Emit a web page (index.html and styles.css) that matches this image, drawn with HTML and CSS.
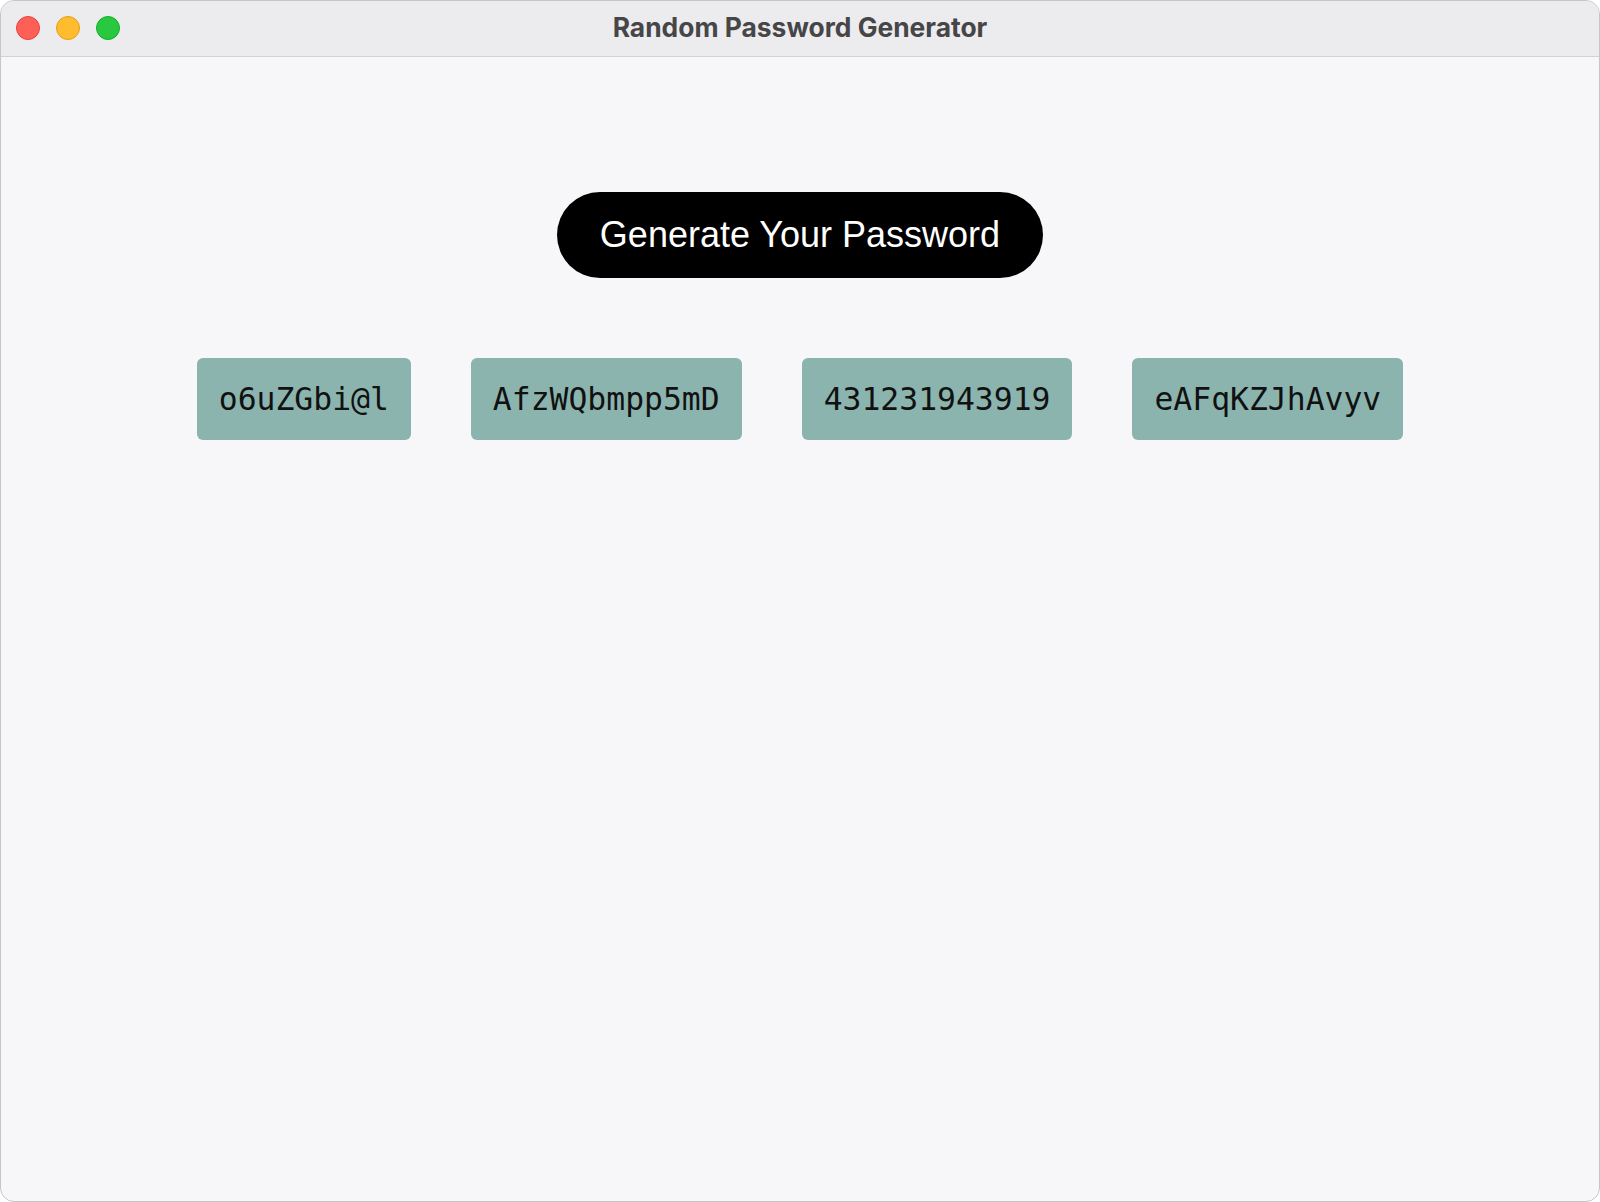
FILE: index.html
```html
<!DOCTYPE html>
<html lang="en">
<head>
<meta charset="utf-8">
<title>Random Password Generator</title>
<link rel="stylesheet" href="styles.css">
</head>
<body>
<div class="window">
  <header class="titlebar">
    <div class="lights">
      <span class="light red"></span>
      <span class="light yellow"></span>
      <span class="light green"></span>
    </div>
    <div class="title">Random Password Generator</div>
    <div class="spacer"></div>
  </header>
  <main class="content">
    <button class="generate" type="button">Generate Your Password</button>
    <div class="passwords">
      <div class="pw">o6uZGbi@l</div>
      <div class="pw">AfzWQbmpp5mD</div>
      <div class="pw">431231943919</div>
      <div class="pw">eAFqKZJhAvyv</div>
    </div>
  </main>
</div>
</body>
</html>
```

FILE: styles.css
```css
html, body {
  margin: 0;
  padding: 0;
  background: #ffffff;
}

.window {
  box-sizing: border-box;
  width: 1600px;
  height: 1202px;
  border: 1px solid #c6c6c8;
  border-radius: 14px;
  overflow: hidden;
  background: #f7f7f9;
  display: flex;
  flex-direction: column;
}

.titlebar {
  box-sizing: border-box;
  height: 56px;
  flex: 0 0 56px;
  background: #ececee;
  border-bottom: 1px solid #d2d2d4;
  display: grid;
  grid-template-columns: 1fr auto 1fr;
  align-items: center;
}

.lights {
  display: flex;
  gap: 16px;
  padding-left: 15px;
  padding-bottom: 1px;
}

.light {
  box-sizing: border-box;
  width: 24px;
  height: 24px;
  border-radius: 50%;
}

.red { background: #fe5f57; border: 1px solid #e2463f; }
.yellow { background: #febc2e; border: 1px solid #e1a116; }
.green { background: #28c840; border: 1px solid #14ae2a; }

.title {
  font-family: Inter, "Liberation Sans", sans-serif;
  font-weight: 700;
  font-size: 26.4px;
  color: #464648;
  padding-bottom: 3px;
}

.content {
  flex: 1;
  display: flex;
  flex-direction: column;
  align-items: center;
  padding-top: 135px;
}

.generate {
  height: 86px;
  padding: 0 43px;
  border: none;
  border-radius: 43px;
  background: #000000;
  color: #ffffff;
  font-family: "Liberation Sans", Arial, sans-serif;
  font-size: 36px;
  cursor: pointer;
}

.passwords {
  display: flex;
  justify-content: center;
  gap: 60px;
  margin-top: 80px;
}

.pw {
  height: 82px;
  display: flex;
  align-items: center;
  padding: 0 22px;
  background: #8bb4ae;
  border-radius: 6px;
  font-family: "DejaVu Sans Mono", "Liberation Mono", monospace;
  font-size: 31.4px;
  color: #111111;
}
```
